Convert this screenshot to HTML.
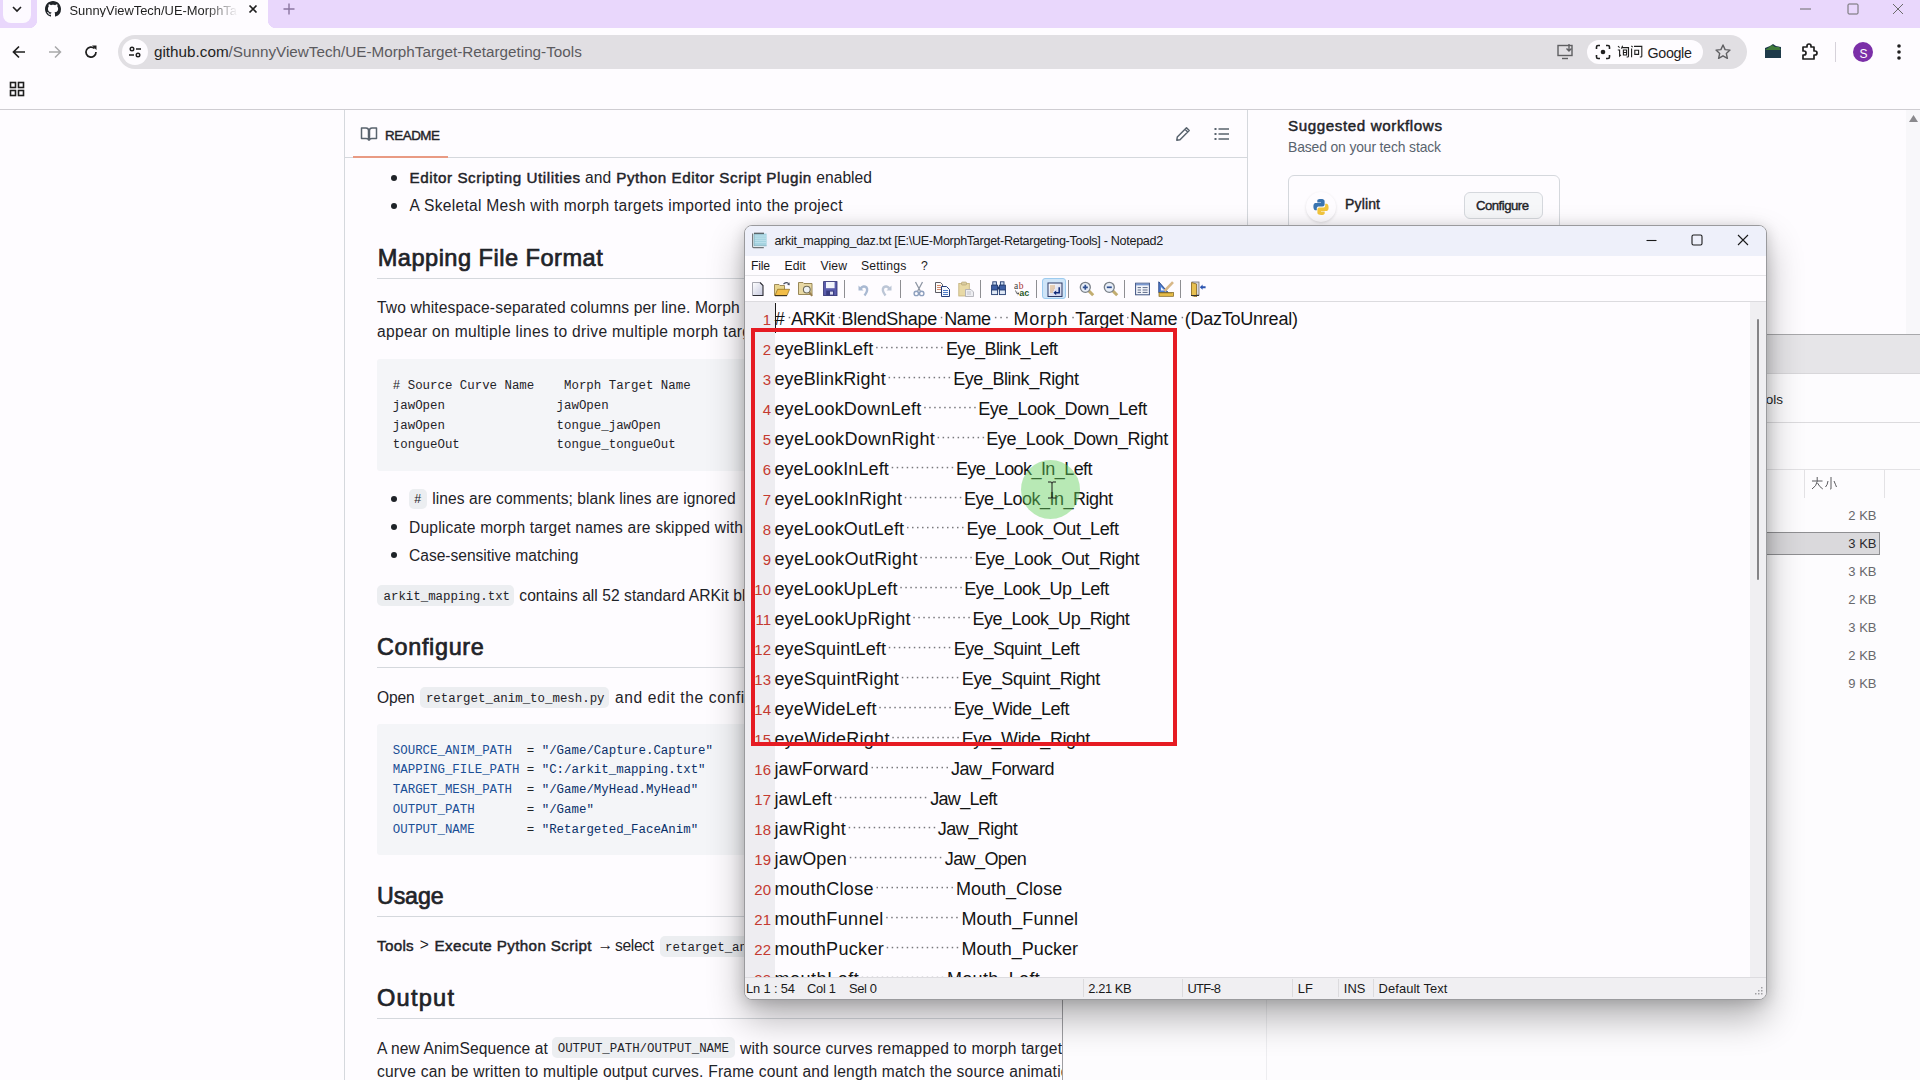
<!DOCTYPE html><html><head><meta charset="utf-8"><style>
    html,body{margin:0;padding:0;}
    body{width:1920px;height:1080px;overflow:hidden;position:relative;background:#fefcff;font-family:"Liberation Sans",sans-serif;}
    div,svg{box-sizing:border-box;}
    </style></head><body>
<div style="position:absolute;left:0px;top:0px;width:1920px;height:28px;background:#e9d7fc;"></div>
<div style="position:absolute;left:3px;top:0px;width:28px;height:23px;background:#fdfaff;border-radius:0 0 8px 8px;"></div>
<svg style="position:absolute;left:11px;top:5px;" width="12" height="8" viewBox="0 0 12 8"><path d="M2 2 L6 6 L10 2" fill="none" stroke="#1f1f1f" stroke-width="1.6"/></svg>
<div style="position:absolute;left:37px;top:0px;width:231px;height:29px;background:#fefcff;border-radius:0 0 0 0;"></div>
<div style="position:absolute;left:29px;top:20px;width:8px;height:9px;background:radial-gradient(circle at 0 0, #e9d7fc 8px, #fefcff 8.5px);"></div>
<div style="position:absolute;left:268px;top:20px;width:8px;height:9px;background:radial-gradient(circle at 100% 0, #e9d7fc 8px, #fefcff 8.5px);"></div>
<svg style="position:absolute;left:45px;top:1px;" width="16" height="16" viewBox="0 0 16 16"><path fill="#1f2328" d="M8 0C3.58 0 0 3.58 0 8c0 3.54 2.29 6.53 5.47 7.59.4.07.55-.17.55-.38 0-.19-.01-.82-.01-1.49-2.01.37-2.53-.49-2.69-.94-.09-.23-.48-.94-.82-1.13-.28-.15-.68-.52-.01-.53.63-.01 1.08.58 1.23.82.72 1.21 1.87.87 2.33.66.07-.52.28-.87.51-1.07-1.78-.2-3.64-.89-3.64-3.95 0-.87.31-1.59.82-2.15-.08-.2-.36-1.02.08-2.12 0 0 .67-.21 2.2.82.64-.18 1.32-.27 2-.27.68 0 1.36.09 2 .27 1.53-1.04 2.2-.82 2.2-.82.44 1.1.16 1.92.08 2.12.51.56.82 1.27.82 2.15 0 3.07-1.87 3.75-3.65 3.95.29.25.54.73.54 1.48 0 1.07-.01 1.93-.01 2.2 0 .21.15.46.55.38A8.013 8.013 0 0016 8c0-4.42-3.58-8-8-8z"/></svg>
<div style="position:absolute;left:69.5px;top:4.54px;font-family:'Liberation Sans', sans-serif;font-size:12.9px;line-height:12.9px;font-weight:400;color:#1f1f1f;white-space:pre;width:168px;overflow:hidden;-webkit-mask-image:linear-gradient(90deg,#000 80%,transparent 100%);">SunnyViewTech/UE-MorphTa</div>
<svg style="position:absolute;left:248px;top:4px;" width="10" height="10" viewBox="0 0 10 10"><path d="M1.5 1.5 L8.5 8.5 M8.5 1.5 L1.5 8.5" stroke="#1f1f1f" stroke-width="1.7"/></svg>
<svg style="position:absolute;left:283px;top:3px;" width="12" height="12" viewBox="0 0 12 12"><path d="M6 0.5 V11.5 M0.5 6 H11.5" stroke="#8a76a0" stroke-width="1.4"/></svg>
<svg style="position:absolute;left:1800px;top:8px;" width="12" height="2" viewBox="0 0 12 2"><path d="M0 1 H11" stroke="#6b6b6b" stroke-width="1"/></svg>
<svg style="position:absolute;left:1847px;top:3px;" width="12" height="12" viewBox="0 0 12 12"><rect x="1" y="1" width="10" height="10" fill="none" stroke="#6b6b6b" stroke-width="1" rx="1"/></svg>
<svg style="position:absolute;left:1892px;top:3px;" width="12" height="12" viewBox="0 0 12 12"><path d="M1 1 L11 11 M11 1 L1 11" stroke="#6b6b6b" stroke-width="1"/></svg>
<svg style="position:absolute;left:11px;top:44px;" width="16" height="16" viewBox="0 0 16 16"><path d="M14 8 H2.5 M8 2.5 L2.5 8 L8 13.5" fill="none" stroke="#1f1f1f" stroke-width="1.7"/></svg>
<svg style="position:absolute;left:47px;top:44px;" width="16" height="16" viewBox="0 0 16 16"><path d="M2 8 H13.5 M8 2.5 L13.5 8 L8 13.5" fill="none" stroke="#a9a9ab" stroke-width="1.5"/></svg>
<svg style="position:absolute;left:83px;top:44px;" width="16" height="16" viewBox="0 0 16 16"><path d="M13 8 A5 5 0 1 1 11.5 4.5" fill="none" stroke="#1f1f1f" stroke-width="1.7"/><path d="M9 1.5 L13.5 1.5 L13.5 6 Z" fill="#1f1f1f"/></svg>
<div style="position:absolute;left:118px;top:35px;width:1629px;height:34px;background:#e1dfe3;border-radius:17px;"></div>
<div style="position:absolute;left:122px;top:39px;width:26px;height:26px;background:#fefcff;border-radius:13px;"></div>
<svg style="position:absolute;left:127px;top:44px;" width="16" height="16" viewBox="0 0 16 16"><circle cx="5" cy="5" r="1.8" fill="none" stroke="#1f1f1f" stroke-width="1.4"/><path d="M9 5 H14 M2 11 H7" stroke="#1f1f1f" stroke-width="1.4"/><circle cx="11" cy="11" r="1.8" fill="none" stroke="#1f1f1f" stroke-width="1.4"/></svg>
<div style="position:absolute;left:154px;top:44.03px;font-family:'Liberation Sans';font-size:15.26px;line-height:15.26px;white-space:pre;color:#5b5a5e"><span style="color:#1f1f1f">github.com</span>/SunnyViewTech/UE-MorphTarget-Retargeting-Tools</div>
<svg style="position:absolute;left:1557px;top:44px;" width="18" height="16" viewBox="0 0 18 16"><rect x="1" y="1.5" width="14" height="10" fill="none" stroke="#5f5f62" stroke-width="1.4"/><path d="M5 14.5 H11" stroke="#5f5f62" stroke-width="1.4"/><path d="M12 0 V7 M9.5 4.5 L12 7 L14.5 4.5" fill="none" stroke="#5f5f62" stroke-width="1.4"/></svg>
<div style="position:absolute;left:1587px;top:40px;width:116px;height:24px;background:#fefcff;border-radius:12px;"></div>
<svg style="position:absolute;left:1595px;top:44px;" width="16" height="16" viewBox="0 0 16 16"><path d="M1.5 5 V3 Q1.5 1.5 3 1.5 H5 M11 1.5 H13 Q14.5 1.5 14.5 3 V5 M14.5 11 V13 Q14.5 14.5 13 14.5 H11 M5 14.5 H3 Q1.5 14.5 1.5 13 V11" fill="none" stroke="#1f1f1f" stroke-width="1.6"/><circle cx="8" cy="8" r="2.3" fill="#1f1f1f"/></svg>
<svg style="position:absolute;left:1617px;top:45px;" width="26" height="13" viewBox="0 0 26 13"><g fill="none" stroke="#1f1f1f" stroke-width="1.1"><path d="M1 1.2 L2.6 2.6 M0.8 5 H2.6 V11 L4 9.8 M5.6 0.8 L4.4 3.6 M5.2 2.6 H11.5 V11.2 Q11.5 12 10.6 12 H9.6 M6.4 5 H9.6 V10 H6.4 Z M6.4 7.5 H9.6"/><path d="M14.4 0.8 L15.6 2.2 M14.6 3.4 V12.2 M17 1.4 H24.8 V11.2 Q24.8 12 23.9 12 H22.8 M17.8 5.2 H21.6 V9.4 H17.8 Z"/></g></svg>
<div style="position:absolute;left:1647.5px;top:45.74px;font-family:'Liberation Sans', sans-serif;font-size:14.3px;line-height:14.3px;font-weight:400;color:#1f1f1f;white-space:pre;letter-spacing:-0.342px;">Google</div>
<svg style="position:absolute;left:1714px;top:43px;" width="18" height="18" viewBox="0 0 18 18"><path d="M9 2 L11.1 6.6 L16 7.1 L12.3 10.4 L13.4 15.3 L9 12.8 L4.6 15.3 L5.7 10.4 L2 7.1 L6.9 6.6 Z" fill="none" stroke="#5f5f62" stroke-width="1.4" stroke-linejoin="round"/></svg>
<svg style="position:absolute;left:1764px;top:43px;" width="19" height="17" viewBox="0 0 19 17"><path d="M1 5 L6 3 L9 1 L12 3 L17 4 L17 15 L1 15 Z" fill="#1e3a4a"/><path d="M4 5 L8 2 L11 4 L15 4 L17 7 L1 7 Z" fill="#3f7a3a"/></svg>
<svg style="position:absolute;left:1800px;top:43px;" width="18" height="18" viewBox="0 0 18 18"><path d="M3 4 H7 V3 A2 2 0 0 1 11 3 V4 H14 V8 H15 A2 2 0 0 1 15 12 H14 V16 H3 V12 H4 A2 2 0 0 0 4 8 H3 Z" fill="none" stroke="#1f1f1f" stroke-width="1.7" stroke-linejoin="round"/></svg>
<div style="position:absolute;left:1835px;top:42px;width:1px;height:20px;background:#d6d2da;"></div>
<div style="position:absolute;left:1853px;top:42px;width:20px;height:20px;background:#7b2fa8;border-radius:10px;"></div>
<div style="position:absolute;left:1859.5px;top:47.80px;font-family:'Liberation Sans', sans-serif;font-size:12px;line-height:12px;font-weight:400;color:#ffffff;white-space:pre;">S</div>
<svg style="position:absolute;left:1896px;top:43px;" width="6" height="18" viewBox="0 0 6 18"><circle cx="3" cy="3" r="1.8" fill="#1f1f1f"/><circle cx="3" cy="9" r="1.8" fill="#1f1f1f"/><circle cx="3" cy="15" r="1.8" fill="#1f1f1f"/></svg>
<svg style="position:absolute;left:9px;top:81px;" width="16" height="16" viewBox="0 0 16 16"><rect x="1.5" y="1.5" width="5" height="5" fill="none" stroke="#1f1f1f" stroke-width="1.6"/><rect x="9.5" y="1.5" width="5" height="5" fill="none" stroke="#1f1f1f" stroke-width="1.6"/><rect x="1.5" y="9.5" width="5" height="5" fill="none" stroke="#1f1f1f" stroke-width="1.6"/><rect x="9.5" y="9.5" width="5" height="5" fill="none" stroke="#1f1f1f" stroke-width="1.6"/></svg>
<div style="position:absolute;left:0px;top:109px;width:1920px;height:1px;background:#cfcdd2;"></div>
<div style="position:absolute;left:344px;top:110px;width:1px;height:970px;background:#d5d8dd;"></div>
<div style="position:absolute;left:1247px;top:110px;width:1px;height:230px;background:#d5d8dd;"></div>
<div style="position:absolute;left:345px;top:157px;width:902px;height:1px;background:#d5d8dd;"></div>
<div style="position:absolute;left:353px;top:156px;width:95px;height:2px;background:#e99a83;"></div>
<svg style="position:absolute;left:360px;top:126px;" width="18" height="16" viewBox="0 0 18 16"><path d="M1.5 2 H6 Q8.5 2 8.5 4.5 V14 Q8.5 12.5 6 12.5 H1.5 Z M16.5 2 H12 Q9.5 2 9.5 4.5 V14 Q9.5 12.5 12 12.5 H16.5 Z" fill="none" stroke="#59636e" stroke-width="1.5" stroke-linejoin="round"/></svg>
<div style="position:absolute;left:385px;top:129.11px;font-family:'Liberation Sans', sans-serif;font-size:13.4px;line-height:13.4px;font-weight:400;color:#1f2328;white-space:pre;letter-spacing:-0.459px;-webkit-text-stroke:0.40px currentColor;">README</div>
<svg style="position:absolute;left:1175px;top:126px;" width="16" height="16" viewBox="0 0 16 16"><path d="M11.5 1.8 L14.2 4.5 L5 13.7 L1.8 14.2 L2.3 11 Z M10 3.3 L12.7 6" fill="none" stroke="#59636e" stroke-width="1.5" stroke-linejoin="round"/></svg>
<svg style="position:absolute;left:1214px;top:127px;" width="16" height="14" viewBox="0 0 16 14"><rect x="0.5" y="1" width="2" height="2" fill="#59636e"/><rect x="0.5" y="6" width="2" height="2" fill="#59636e"/><rect x="0.5" y="11" width="2" height="2" fill="#59636e"/><path d="M4.5 2 H15 M4.5 7 H15 M4.5 12 H15" stroke="#59636e" stroke-width="1.6"/></svg>
<div style="position:absolute;left:391px;top:175px;width:6px;height:6px;background:#1f2328;border-radius:3px;"></div>
<div style="position:absolute;left:409.5px;top:169.88px;font-family:'Liberation Sans', sans-serif;font-size:15.2px;line-height:15.2px;font-weight:400;color:#1f2328;white-space:pre;letter-spacing:0.574px;-webkit-text-stroke:0.46px currentColor;">Editor Scripting Utilities</div>
<div style="position:absolute;left:585px;top:170.24px;font-family:'Liberation Sans', sans-serif;font-size:15.6px;line-height:15.6px;font-weight:400;color:#1f2328;white-space:pre;letter-spacing:0.109px;">and</div>
<div style="position:absolute;left:616.25px;top:169.88px;font-family:'Liberation Sans', sans-serif;font-size:15.2px;line-height:15.2px;font-weight:400;color:#1f2328;white-space:pre;letter-spacing:0.552px;-webkit-text-stroke:0.46px currentColor;">Python Editor Script Plugin</div>
<div style="position:absolute;left:816.25px;top:170.24px;font-family:'Liberation Sans', sans-serif;font-size:15.6px;line-height:15.6px;font-weight:400;color:#1f2328;white-space:pre;letter-spacing:0.042px;">enabled</div>
<div style="position:absolute;left:391px;top:203px;width:6px;height:6px;background:#1f2328;border-radius:3px;"></div>
<div style="position:absolute;left:409.5px;top:198.24px;font-family:'Liberation Sans', sans-serif;font-size:15.6px;line-height:15.6px;font-weight:400;color:#1f2328;white-space:pre;letter-spacing:0.287px;">A Skeletal Mesh with morph targets imported into the project</div>
<div style="position:absolute;left:377.7px;top:247.24px;font-family:'Liberation Sans', sans-serif;font-size:23.6px;line-height:23.6px;font-weight:400;color:#1f2328;white-space:pre;letter-spacing:0.480px;-webkit-text-stroke:0.71px currentColor;">Mapping File Format</div>
<div style="position:absolute;left:377px;top:278px;width:870px;height:1px;background:#d5d8dd;"></div>
<div style="position:absolute;left:377px;top:300.24px;font-family:'Liberation Sans', sans-serif;font-size:15.6px;line-height:15.6px;font-weight:400;color:#1f2328;white-space:pre;letter-spacing:0.137px;">Two whitespace-separated columns per line. Morph target names may</div>
<div style="position:absolute;left:377px;top:324.24px;font-family:'Liberation Sans', sans-serif;font-size:15.6px;line-height:15.6px;font-weight:400;color:#1f2328;white-space:pre;letter-spacing:0.309px;">appear on multiple lines to drive multiple morph targets from one source curve.</div>
<div style="position:absolute;left:377px;top:359px;width:870px;height:111.5px;background:#f4f5f8;border-radius:3px;"></div>
<div style="position:absolute;left:392.8px;top:380.06px;font-family:'Liberation Mono', monospace;font-size:12.42px;line-height:12.42px;font-weight:400;color:#1f2328;white-space:pre;"># Source Curve Name    Morph Target Name</div>
<div style="position:absolute;left:392.8px;top:400.06px;font-family:'Liberation Mono', monospace;font-size:12.42px;line-height:12.42px;font-weight:400;color:#1f2328;white-space:pre;">jawOpen               jawOpen</div>
<div style="position:absolute;left:392.8px;top:420.06px;font-family:'Liberation Mono', monospace;font-size:12.42px;line-height:12.42px;font-weight:400;color:#1f2328;white-space:pre;">jawOpen               tongue_jawOpen</div>
<div style="position:absolute;left:392.8px;top:438.86px;font-family:'Liberation Mono', monospace;font-size:12.42px;line-height:12.42px;font-weight:400;color:#1f2328;white-space:pre;">tongueOut             tongue_tongueOut</div>
<div style="position:absolute;left:391px;top:496px;width:6px;height:6px;background:#1f2328;border-radius:3px;"></div>
<div style="position:absolute;left:409px;top:489px;width:18px;height:20px;background:#eceef1;border-radius:5px;"></div>
<div style="position:absolute;left:414px;top:494.06px;font-family:'Liberation Mono', monospace;font-size:12.42px;line-height:12.42px;font-weight:400;color:#1f2328;white-space:pre;">#</div>
<div style="position:absolute;left:432.2px;top:491.24px;font-family:'Liberation Sans', sans-serif;font-size:15.6px;line-height:15.6px;font-weight:400;color:#1f2328;white-space:pre;letter-spacing:0.062px;">lines are comments; blank lines are ignored</div>
<div style="position:absolute;left:391px;top:524px;width:6px;height:6px;background:#1f2328;border-radius:3px;"></div>
<div style="position:absolute;left:409px;top:519.74px;font-family:'Liberation Sans', sans-serif;font-size:15.6px;line-height:15.6px;font-weight:400;color:#1f2328;white-space:pre;letter-spacing:0.184px;">Duplicate morph target names are skipped with a warning</div>
<div style="position:absolute;left:391px;top:552px;width:6px;height:6px;background:#1f2328;border-radius:3px;"></div>
<div style="position:absolute;left:409px;top:547.74px;font-family:'Liberation Sans', sans-serif;font-size:15.6px;line-height:15.6px;font-weight:400;color:#1f2328;white-space:pre;letter-spacing:-0.022px;">Case-sensitive matching</div>
<div style="position:absolute;left:377px;top:584.5px;width:137px;height:21px;background:#eceef1;border-radius:5px;"></div>
<div style="position:absolute;left:383.5px;top:590.86px;font-family:'Liberation Mono', monospace;font-size:12.42px;line-height:12.42px;font-weight:400;color:#1f2328;white-space:pre;">arkit_mapping.txt</div>
<div style="position:absolute;left:519.3px;top:588.24px;font-family:'Liberation Sans', sans-serif;font-size:15.6px;line-height:15.6px;font-weight:400;color:#1f2328;white-space:pre;letter-spacing:0.048px;">contains all 52 standard ARKit blendshapes mapped to DazToUnreal names.</div>
<div style="position:absolute;left:377px;top:635.61px;font-family:'Liberation Sans', sans-serif;font-size:23.4px;line-height:23.4px;font-weight:400;color:#1f2328;white-space:pre;letter-spacing:0.672px;-webkit-text-stroke:0.70px currentColor;">Configure</div>
<div style="position:absolute;left:377px;top:667px;width:870px;height:1px;background:#d5d8dd;"></div>
<div style="position:absolute;left:377.1px;top:690.24px;font-family:'Liberation Sans', sans-serif;font-size:15.6px;line-height:15.6px;font-weight:400;color:#1f2328;white-space:pre;letter-spacing:-0.185px;">Open</div>
<div style="position:absolute;left:420.4px;top:686.5px;width:189px;height:21px;background:#eceef1;border-radius:5px;"></div>
<div style="position:absolute;left:425.9px;top:692.86px;font-family:'Liberation Mono', monospace;font-size:12.42px;line-height:12.42px;font-weight:400;color:#1f2328;white-space:pre;">retarget_anim_to_mesh.py</div>
<div style="position:absolute;left:614.9px;top:690.24px;font-family:'Liberation Sans', sans-serif;font-size:15.6px;line-height:15.6px;font-weight:400;color:#1f2328;white-space:pre;letter-spacing:0.626px;">and edit the config section at the top:</div>
<div style="position:absolute;left:377px;top:724px;width:870px;height:131px;background:#f4f5f8;border-radius:3px;"></div>
<div style="position:absolute;left:392.8px;top:744.56px;font-family:'Liberation Mono', monospace;font-size:12.42px;line-height:12.42px;font-weight:400;color:#1f2328;white-space:pre;"><span style="color:#1b4f96">SOURCE_ANIM_PATH </span> <span style="color:#1f2328">=</span> <span style="color:#0a3069">"/Game/Capture.Capture"</span></div>
<div style="position:absolute;left:392.8px;top:764.31px;font-family:'Liberation Mono', monospace;font-size:12.42px;line-height:12.42px;font-weight:400;color:#1f2328;white-space:pre;"><span style="color:#1b4f96">MAPPING_FILE_PATH</span> <span style="color:#1f2328">=</span> <span style="color:#0a3069">"C:/arkit_mapping.txt"</span></div>
<div style="position:absolute;left:392.8px;top:784.06px;font-family:'Liberation Mono', monospace;font-size:12.42px;line-height:12.42px;font-weight:400;color:#1f2328;white-space:pre;"><span style="color:#1b4f96">TARGET_MESH_PATH </span> <span style="color:#1f2328">=</span> <span style="color:#0a3069">"/Game/MyHead.MyHead"</span></div>
<div style="position:absolute;left:392.8px;top:803.81px;font-family:'Liberation Mono', monospace;font-size:12.42px;line-height:12.42px;font-weight:400;color:#1f2328;white-space:pre;"><span style="color:#1b4f96">OUTPUT_PATH      </span> <span style="color:#1f2328">=</span> <span style="color:#0a3069">"/Game"</span></div>
<div style="position:absolute;left:392.8px;top:823.56px;font-family:'Liberation Mono', monospace;font-size:12.42px;line-height:12.42px;font-weight:400;color:#1f2328;white-space:pre;"><span style="color:#1b4f96">OUTPUT_NAME      </span> <span style="color:#1f2328">=</span> <span style="color:#0a3069">"Retargeted_FaceAnim"</span></div>
<div style="position:absolute;left:377px;top:884.78px;font-family:'Liberation Sans', sans-serif;font-size:23.2px;line-height:23.2px;font-weight:400;color:#1f2328;white-space:pre;letter-spacing:-0.108px;-webkit-text-stroke:0.70px currentColor;">Usage</div>
<div style="position:absolute;left:377px;top:916px;width:870px;height:1px;background:#d5d8dd;"></div>
<div style="position:absolute;left:377px;top:937.58px;font-family:'Liberation Sans', sans-serif;font-size:15.2px;line-height:15.2px;font-weight:400;color:#1f2328;white-space:pre;letter-spacing:0.308px;-webkit-text-stroke:0.46px currentColor;">Tools</div>
<div style="position:absolute;left:419.8px;top:937.24px;font-family:'Liberation Sans', sans-serif;font-size:15.6px;line-height:15.6px;font-weight:400;color:#1f2328;white-space:pre;letter-spacing:-1.009px;">&gt;</div>
<div style="position:absolute;left:434.6px;top:937.58px;font-family:'Liberation Sans', sans-serif;font-size:15.2px;line-height:15.2px;font-weight:400;color:#1f2328;white-space:pre;letter-spacing:0.374px;-webkit-text-stroke:0.46px currentColor;">Execute Python Script</div>
<div style="position:absolute;left:597.6px;top:937.24px;font-family:'Liberation Sans', sans-serif;font-size:15.6px;line-height:15.6px;font-weight:400;color:#1f2328;white-space:pre;">→</div>
<div style="position:absolute;left:614.9px;top:938.24px;font-family:'Liberation Sans', sans-serif;font-size:15.6px;line-height:15.6px;font-weight:400;color:#1f2328;white-space:pre;letter-spacing:-0.310px;">select</div>
<div style="position:absolute;left:659.6px;top:936px;width:200px;height:21px;background:#eceef1;border-radius:5px;"></div>
<div style="position:absolute;left:665.1px;top:941.86px;font-family:'Liberation Mono', monospace;font-size:12.42px;line-height:12.42px;font-weight:400;color:#1f2328;white-space:pre;">retarget_anim_to_mesh.py</div>
<div style="position:absolute;left:377px;top:987.44px;font-family:'Liberation Sans', sans-serif;font-size:23.6px;line-height:23.6px;font-weight:400;color:#1f2328;white-space:pre;letter-spacing:1.234px;-webkit-text-stroke:0.71px currentColor;">Output</div>
<div style="position:absolute;left:377px;top:1018px;width:870px;height:1px;background:#d5d8dd;"></div>
<div style="position:absolute;left:377px;top:1040.74px;font-family:'Liberation Sans', sans-serif;font-size:15.6px;line-height:15.6px;font-weight:400;color:#1f2328;white-space:pre;letter-spacing:0.092px;">A new AnimSequence at</div>
<div style="position:absolute;left:552.3px;top:1037px;width:182.3px;height:21px;background:#eceef1;border-radius:5px;"></div>
<div style="position:absolute;left:557.7px;top:1043.36px;font-family:'Liberation Mono', monospace;font-size:12.42px;line-height:12.42px;font-weight:400;color:#1f2328;white-space:pre;">OUTPUT_PATH/OUTPUT_NAME</div>
<div style="position:absolute;left:740px;top:1040.74px;font-family:'Liberation Sans', sans-serif;font-size:15.6px;line-height:15.6px;font-weight:400;color:#1f2328;white-space:pre;letter-spacing:0.198px;">with source curves remapped to morph target names. Each source</div>
<div style="position:absolute;left:377px;top:1063.74px;font-family:'Liberation Sans', sans-serif;font-size:15.6px;line-height:15.6px;font-weight:400;color:#1f2328;white-space:pre;letter-spacing:0.200px;">curve can be written to multiple output curves. Frame count and length match the source animation.</div>
<div style="position:absolute;left:1288px;top:118.08px;font-family:'Liberation Sans', sans-serif;font-size:15.2px;line-height:15.2px;font-weight:400;color:#1f2328;white-space:pre;letter-spacing:0.582px;-webkit-text-stroke:0.46px currentColor;">Suggested workflows</div>
<div style="position:absolute;left:1288px;top:141.19px;font-family:'Liberation Sans', sans-serif;font-size:13.9px;line-height:13.9px;font-weight:400;color:#59636e;white-space:pre;letter-spacing:-0.130px;">Based on your tech stack</div>
<div style="position:absolute;left:1288px;top:174.5px;width:272px;height:80px;border:1px solid #d5d8dd;border-radius:6px;background:#fefcff;"></div>
<div style="position:absolute;left:1306px;top:192px;width:30px;height:30px;background:#fefcff;border-radius:15px;box-shadow:0 1px 3px rgba(0,0,0,0.12);"></div>
<svg style="position:absolute;left:1312px;top:198px;" width="18" height="18" viewBox="0 0 18 18"><path d="M8.8 1 C5 1 5.3 2.7 5.3 2.7 V4.4 H9 V5 H3.8 C3.8 5 1.4 4.7 1.4 8.6 C1.4 12.4 3.5 12.3 3.5 12.3 H4.8 V10.5 C4.8 10.5 4.7 8.4 6.9 8.4 H10.6 C10.6 8.4 12.6 8.4 12.6 6.5 V3.2 C12.6 3.2 12.9 1 8.8 1 Z" fill="#3a74b0"/><path d="M9.2 17 C13 17 12.7 15.3 12.7 15.3 V13.6 H9 V13 H14.2 C14.2 13 16.6 13.3 16.6 9.4 C16.6 5.6 14.5 5.7 14.5 5.7 H13.2 V7.5 C13.2 7.5 13.3 9.6 11.1 9.6 H7.4 C7.4 9.6 5.4 9.6 5.4 11.5 V14.8 C5.4 14.8 5.1 17 9.2 17 Z" fill="#f2c53d"/></svg>
<div style="position:absolute;left:1345px;top:196.60px;font-family:'Liberation Sans', sans-serif;font-size:14px;line-height:14px;font-weight:400;color:#1f2328;white-space:pre;letter-spacing:0.153px;-webkit-text-stroke:0.42px currentColor;">Pylint</div>
<div style="position:absolute;left:1463.5px;top:191.5px;width:79px;height:27px;background:#f6f7f9;border:1px solid #d5d8dd;border-radius:6px;"></div>
<div style="position:absolute;left:1476px;top:199.28px;font-family:'Liberation Sans', sans-serif;font-size:13.2px;line-height:13.2px;font-weight:400;color:#1f2328;white-space:pre;letter-spacing:-0.523px;-webkit-text-stroke:0.40px currentColor;">Configure</div>
<div style="position:absolute;left:1906px;top:110px;width:14px;height:224px;background:#f8f7fa;"></div>
<svg style="position:absolute;left:1908px;top:114px;" width="11" height="9" viewBox="0 0 11 9"><path d="M5.5 1 L10 8 H1 Z" fill="#8a898d"/></svg>
<div style="position:absolute;left:1062px;top:334px;width:858px;height:746px;background:#fdfcfe;border-left:1px solid #9e9ea2;border-top:1px solid #a8a8ab;"></div>
<div style="position:absolute;left:1063px;top:335px;width:857px;height:39px;background:#e6e5e8;border-bottom:1px solid #d8d7da;"></div>
<div style="position:absolute;right:137px;top:392.52px;font-family:'Liberation Sans', sans-serif;font-size:13.5px;line-height:13.5px;font-weight:400;color:#1f1f1f;white-space:pre;text-align:right;">UE-MorphTarget-Retargeting-Tools</div>
<div style="position:absolute;left:1063px;top:422px;width:857px;height:1px;background:#dcdbde;"></div>
<div style="position:absolute;left:1063px;top:469px;width:857px;height:1px;background:#e3e2e5;"></div>
<div style="position:absolute;left:1804px;top:470px;width:1px;height:28px;background:#e3e2e5;"></div>
<div style="position:absolute;left:1884px;top:470px;width:1px;height:28px;background:#e3e2e5;"></div>
<svg style="position:absolute;left:1811px;top:476px;" width="26" height="14" viewBox="0 0 26 14"><path d="M6.2 1 V5.5 M1 5 H11.5 M6.2 5.5 Q5.5 10 1 13 M6.5 7 Q8.5 11 11.8 13" fill="none" stroke="#5a5a5e" stroke-width="1"/><path d="M20 1 V12.5 Q20 13.3 19 13 M17 5 Q16.5 9 14.5 11 M23 5 Q24.5 8.5 25.5 11" fill="none" stroke="#5a5a5e" stroke-width="1"/></svg>
<div style="position:absolute;left:1063px;top:531.5px;width:817px;height:23px;background:#dad9dc;border:1px solid #8f8f92;"></div>
<div style="position:absolute;right:43.5px;top:508.95px;font-family:'Liberation Sans', sans-serif;font-size:13px;line-height:13px;font-weight:400;color:#68686c;white-space:pre;text-align:right;">2 KB</div>
<div style="position:absolute;right:43.5px;top:536.95px;font-family:'Liberation Sans', sans-serif;font-size:13px;line-height:13px;font-weight:400;color:#2a2a2d;white-space:pre;text-align:right;">3 KB</div>
<div style="position:absolute;right:43.5px;top:564.95px;font-family:'Liberation Sans', sans-serif;font-size:13px;line-height:13px;font-weight:400;color:#68686c;white-space:pre;text-align:right;">3 KB</div>
<div style="position:absolute;right:43.5px;top:592.95px;font-family:'Liberation Sans', sans-serif;font-size:13px;line-height:13px;font-weight:400;color:#68686c;white-space:pre;text-align:right;">2 KB</div>
<div style="position:absolute;right:43.5px;top:620.95px;font-family:'Liberation Sans', sans-serif;font-size:13px;line-height:13px;font-weight:400;color:#68686c;white-space:pre;text-align:right;">3 KB</div>
<div style="position:absolute;right:43.5px;top:648.95px;font-family:'Liberation Sans', sans-serif;font-size:13px;line-height:13px;font-weight:400;color:#68686c;white-space:pre;text-align:right;">2 KB</div>
<div style="position:absolute;right:43.5px;top:676.95px;font-family:'Liberation Sans', sans-serif;font-size:13px;line-height:13px;font-weight:400;color:#68686c;white-space:pre;text-align:right;">9 KB</div>
<div style="position:absolute;left:1266px;top:999px;width:1px;height:81px;background:#ededf0;"></div>
<div style="position:absolute;left:744px;top:225px;width:1023px;height:775px;background:#fefcff;border:1px solid #9a9a9d;border-radius:8px;box-shadow:0 18px 36px rgba(0,0,0,0.30),0 2px 14px rgba(0,0,0,0.16);overflow:hidden;"></div>
<div style="position:absolute;left:745px;top:226px;width:1021px;height:30px;background:#eef0fa;border-radius:7px 7px 0 0;"></div>
<svg style="position:absolute;left:751px;top:231px;" width="18" height="18" viewBox="0 0 18 18"><rect x="1.5" y="2.5" width="11" height="14" fill="#fbfdff"/><path d="M1.6 2.5 V15.6 Q1.6 16.6 2.6 16.6 H12.8" fill="none" stroke="#707478" stroke-width="1.1"/><rect x="3" y="2.6" width="12.6" height="12.2" fill="#a5d3e0"/><path d="M3.5 5 H15 M3.5 7.2 H15 M3.5 9.4 H15 M3.5 11.6 H15" stroke="#c9e8f0" stroke-width="0.7"/><path d="M3 2.6 V14.8 H15.6" fill="none" stroke="#7da9b6" stroke-width="0.7"/><g fill="#3c4448"><circle cx="4" cy="2.3" r="0.9"/><circle cx="6" cy="2.3" r="0.9"/><circle cx="8" cy="2.3" r="0.9"/><circle cx="10" cy="2.3" r="0.9"/><circle cx="12" cy="2.3" r="0.9"/></g></svg>
<div style="position:absolute;left:774.4px;top:234.59px;font-family:'Liberation Sans', sans-serif;font-size:12.6px;line-height:12.6px;font-weight:400;color:#1a1a1a;white-space:pre;letter-spacing:-0.309px;">arkit_mapping_daz.txt [E:\UE-MorphTarget-Retargeting-Tools] - Notepad2</div>
<svg style="position:absolute;left:1646px;top:239px;" width="12" height="3" viewBox="0 0 12 3"><path d="M0.5 1.5 H10.5" stroke="#1a1a1a" stroke-width="1.1"/></svg>
<svg style="position:absolute;left:1691px;top:234px;" width="12" height="12" viewBox="0 0 12 12"><rect x="1" y="1" width="10" height="10" rx="1.5" fill="none" stroke="#1a1a1a" stroke-width="1.1"/></svg>
<svg style="position:absolute;left:1737px;top:234px;" width="12" height="12" viewBox="0 0 12 12"><path d="M1 1 L11 11 M11 1 L1 11" stroke="#1a1a1a" stroke-width="1.1"/></svg>
<div style="position:absolute;left:745px;top:256px;width:1021px;height:20px;background:#fefcff;border-bottom:1px solid #e6e5e9;"></div>
<div style="position:absolute;left:751px;top:260.13px;font-family:'Liberation Sans', sans-serif;font-size:12.2px;line-height:12.2px;font-weight:400;color:#1a1a1a;white-space:pre;letter-spacing:-0.214px;">File</div>
<div style="position:absolute;left:784.5px;top:260.13px;font-family:'Liberation Sans', sans-serif;font-size:12.2px;line-height:12.2px;font-weight:400;color:#1a1a1a;white-space:pre;letter-spacing:0.078px;">Edit</div>
<div style="position:absolute;left:820.5px;top:260.13px;font-family:'Liberation Sans', sans-serif;font-size:12.2px;line-height:12.2px;font-weight:400;color:#1a1a1a;white-space:pre;letter-spacing:0.099px;">View</div>
<div style="position:absolute;left:861px;top:260.13px;font-family:'Liberation Sans', sans-serif;font-size:12.2px;line-height:12.2px;font-weight:400;color:#1a1a1a;white-space:pre;letter-spacing:0.172px;">Settings</div>
<div style="position:absolute;left:921px;top:260.13px;font-family:'Liberation Sans', sans-serif;font-size:12.2px;line-height:12.2px;font-weight:400;color:#1a1a1a;white-space:pre;">?</div>
<div style="position:absolute;left:745px;top:276px;width:1021px;height:26px;background:#fefcff;border-bottom:1px solid #dcdbdf;"></div>
<svg style="position:absolute;left:751px;top:281px;" width="16" height="16" viewBox="0 0 16 16"><defs><linearGradient id="gN" x1="0" y1="0" x2="1" y2="1"><stop offset="0" stop-color="#ffffff"/><stop offset="1" stop-color="#c6c8de"/></linearGradient></defs><path d="M1.5 1.5 H9 L12 4.5 V14.5 H1.5 Z" fill="url(#gN)"/><path d="M9 1.5 L12 4.5 V14.5 H1.5" fill="none" stroke="#2c2c34" stroke-width="1.1"/><path d="M1.5 14.5 V1.5 H9" fill="none" stroke="#9c9ca6" stroke-width="0.9"/></svg>
<svg style="position:absolute;left:774px;top:281px;" width="16" height="16" viewBox="0 0 16 16"><path d="M0.5 3.5 H5 L6 4.5 H10.5 V14.5 H0.5 Z" fill="#e8d48e" stroke="#8a7440" stroke-width="0.8"/><path d="M1 14.5 L3.6 8.3 H15.6 L13 14.5 Z" fill="#f2bd48" stroke="#8a6a20" stroke-width="0.7"/><path d="M1 14.7 H13" stroke="#2a2418" stroke-width="1"/><path d="M9.5 3.2 Q12 0.2 14.8 2.6" fill="none" stroke="#4a5062" stroke-width="1.2"/><path d="M13.2 3.9 L15.8 4.2 L15.4 1.3 Z" fill="#4a5062"/></svg>
<svg style="position:absolute;left:798px;top:281px;" width="16" height="16" viewBox="0 0 16 16"><path d="M0.5 1.5 H5 L6 2.5 H14 V13.5 H0.5 Z" fill="#e8d8a4" stroke="#8f7d4a" stroke-width="0.9"/><circle cx="8.8" cy="8.6" r="3.4" fill="#eef2f4" stroke="#6d6a5a" stroke-width="1.1"/><path d="M11.3 11.3 L14.2 14.8" stroke="#9a8050" stroke-width="2.1"/></svg>
<svg style="position:absolute;left:823px;top:281px;" width="16" height="16" viewBox="0 0 16 16"><rect x="0.6" y="0.6" width="13.4" height="14" fill="#5a5cac" stroke="#2e2f6e" stroke-width="0.8"/><rect x="3" y="1" width="8.6" height="6.2" fill="#f2f4fb"/><rect x="3.2" y="9.6" width="8" height="5" fill="#3a3c80"/><rect x="7" y="10.6" width="3" height="3" fill="#d8daf0"/></svg>
<div style="position:absolute;left:844px;top:280px;width:1px;height:18px;background:#8e8e92;"></div>
<svg style="position:absolute;left:855px;top:281px;" width="16" height="16" viewBox="0 0 16 16"><path d="M3.5 4.5 V9.5 H8.5 Z" fill="#a9b9d2"/><path d="M5 8 Q8.5 3.8 11.5 6.5 Q13.5 9.5 9.5 14.5" fill="none" stroke="#a9b9d2" stroke-width="2.4"/></svg>
<svg style="position:absolute;left:879px;top:281px;" width="16" height="16" viewBox="0 0 16 16"><path d="M12.5 4.5 V9.5 H7.5 Z" fill="#bcc6d6"/><path d="M11 8 Q7.5 3.8 4.5 6.5 Q2.5 9.5 6.5 14.5" fill="none" stroke="#bcc6d6" stroke-width="2.4"/></svg>
<div style="position:absolute;left:900px;top:280px;width:1px;height:18px;background:#8e8e92;"></div>
<svg style="position:absolute;left:911px;top:281px;" width="16" height="16" viewBox="0 0 16 16"><path d="M4.5 1 L9.3 10 M11.5 1 L6.7 10" stroke="#8e96a4" stroke-width="1.3"/><circle cx="5.3" cy="12.4" r="2.2" fill="none" stroke="#8ea0be" stroke-width="1.4"/><circle cx="10.7" cy="12.4" r="2.2" fill="none" stroke="#8ea0be" stroke-width="1.4"/></svg>
<svg style="position:absolute;left:934px;top:281px;" width="16" height="16" viewBox="0 0 16 16"><path d="M1.5 1.5 H6.5 L8.5 3.5 V11.5 H1.5 Z" fill="#fdfbf8" stroke="#4a4a52" stroke-width="0.9"/><path d="M3 4.5 H7 M3 6.5 H7 M3 8.5 H7" stroke="#d07a5a" stroke-width="0.9"/><path d="M7.5 5.5 H12.5 L15.5 8.5 V15.5 H7.5 Z" fill="#f6f9ff" stroke="#233c78" stroke-width="1"/><path d="M9 9.5 H14 M9 11.5 H14 M9 13.5 H14" stroke="#3c6cc0" stroke-width="0.9"/></svg>
<svg style="position:absolute;left:958px;top:281px;" width="16" height="16" viewBox="0 0 16 16"><rect x="0.8" y="2.5" width="10.5" height="12.5" fill="#e8d9a6" stroke="#c2b07a" stroke-width="0.8"/><rect x="3.5" y="1" width="5" height="3" rx="0.8" fill="#d9cba0" stroke="#b0a070" stroke-width="0.6"/><path d="M7.5 8.5 H13 L15.5 11 V15.5 H7.5 Z" fill="#eeeef2" stroke="#a8a8b0" stroke-width="0.8"/><path d="M9 11 H13 M9 13 H13" stroke="#b8b8c0" stroke-width="0.8"/></svg>
<div style="position:absolute;left:980px;top:280px;width:1px;height:18px;background:#8e8e92;"></div>
<svg style="position:absolute;left:991px;top:281px;" width="16" height="16" viewBox="0 0 16 16"><g stroke="#243c70" stroke-width="0.9"><rect x="1.8" y="0.8" width="3.6" height="3.4" fill="#c8d8f0"/><rect x="9.4" y="0.8" width="3.6" height="3.4" fill="#c8d8f0"/><rect x="0.6" y="4.2" width="6" height="6" fill="#3e5fa5"/><rect x="8.4" y="4.2" width="6" height="6" fill="#3e5fa5"/><rect x="0.6" y="9" width="6" height="4.6" fill="#dfe8f6"/><rect x="8.4" y="9" width="6" height="4.6" fill="#dfe8f6"/></g><rect x="6.2" y="5.5" width="2.6" height="3" fill="#243c70"/></svg>
<svg style="position:absolute;left:1014px;top:281px;" width="16" height="16" viewBox="0 0 16 16"><text x="0" y="7.6" font-family="Liberation Serif" font-size="9.5" fill="#3a3a3a">a</text><text x="4.8" y="7.6" font-family="Liberation Serif" font-size="9.5" fill="#a83030">b</text><text x="5.2" y="15" font-family="Liberation Sans" font-size="9" font-weight="700" fill="#2a5a2a">ac</text><path d="M1.5 9.5 L2.8 12.5 L5 12.5 M3.6 11.3 L5 12.5 L3.6 13.7" fill="none" stroke="#444" stroke-width="0.8"/></svg>
<div style="position:absolute;left:1036px;top:280px;width:1px;height:18px;background:#8e8e92;"></div>
<div style="position:absolute;left:1042px;top:278px;width:24px;height:21px;background:#cfe5f8;border:1px solid #9ccbef;border-radius:3px;"></div>
<svg style="position:absolute;left:1047px;top:282px;" width="16" height="16" viewBox="0 0 16 16"><defs><linearGradient id="gW" x1="0" y1="0" x2="1" y2="1"><stop offset="0" stop-color="#ffffff"/><stop offset="1" stop-color="#c8cde8"/></linearGradient></defs><rect x="1" y="1" width="14" height="13.5" fill="url(#gW)" stroke="#2c3a66" stroke-width="1"/><path d="M3 4 H8 M3 6 H8 M3 8 H7 M3 10 H6" stroke="#d6a060" stroke-width="0.9"/><path d="M12.2 5.2 V10.8 H7.8" fill="none" stroke="#102a78" stroke-width="1.5"/><path d="M6.4 10.8 L9.2 8.4 V13.2 Z" fill="#102a78"/></svg>
<div style="position:absolute;left:1068px;top:280px;width:1px;height:18px;background:#8e8e92;"></div>
<svg style="position:absolute;left:1079px;top:281px;" width="16" height="16" viewBox="0 0 16 16"><path d="M9.6 9.6 L14.2 14.2" stroke="#c2ad70" stroke-width="3"/><circle cx="6.3" cy="6.3" r="5" fill="#e8eef8" stroke="#7a8088" stroke-width="1.3"/><path d="M3.8 6.3 H8.8 M6.3 3.8 V8.8" stroke="#2f4f90" stroke-width="1.7"/></svg>
<svg style="position:absolute;left:1103px;top:281px;" width="16" height="16" viewBox="0 0 16 16"><path d="M9.6 9.6 L14.2 14.2" stroke="#c2ad70" stroke-width="3"/><circle cx="6.3" cy="6.3" r="5" fill="#e8eef8" stroke="#7a8088" stroke-width="1.3"/><path d="M3.8 6.3 H8.8" stroke="#2f4f90" stroke-width="1.7"/></svg>
<div style="position:absolute;left:1124px;top:280px;width:1px;height:18px;background:#8e8e92;"></div>
<svg style="position:absolute;left:1135px;top:281px;" width="16" height="16" viewBox="0 0 16 16"><rect x="0.6" y="2.2" width="13.8" height="11.6" fill="#f4f6fb" stroke="#3c5080" stroke-width="1"/><rect x="1" y="2.6" width="13" height="1.8" fill="#7a98d0"/><path d="M2.6 6.6 H6 M7.6 6.6 H12.6 M2.6 9 H6 M7.6 9 H12.6 M2.6 11.4 H6 M7.6 11.4 H12.6" stroke="#4c5a7a" stroke-width="0.9"/></svg>
<svg style="position:absolute;left:1158px;top:281px;" width="16" height="16" viewBox="0 0 16 16"><path d="M0.8 0.8 V11.6 H10.2 Z" fill="#4f7ed0" stroke="#1e3c80" stroke-width="0.9"/><path d="M3 6 V9.6 H6.6 Z" fill="#f0f4ff"/><path d="M15 1.2 L6.5 10" stroke="#d8b888" stroke-width="2.6"/><rect x="1" y="11.5" width="14.6" height="3.8" fill="#e6bc48" stroke="#7a6020" stroke-width="0.7"/><path d="M3 11.5 V13 M5 11.5 V13 M7 11.5 V13 M9 11.5 V13 M11 11.5 V13 M13 11.5 V13" stroke="#7a6020" stroke-width="0.5"/></svg>
<div style="position:absolute;left:1180px;top:280px;width:1px;height:18px;background:#8e8e92;"></div>
<svg style="position:absolute;left:1190px;top:281px;" width="16" height="16" viewBox="0 0 16 16"><rect x="2" y="1" width="7" height="13" fill="#d8d8dc" stroke="#707078" stroke-width="0.8"/><path d="M1.5 1.5 L6.5 3 V16 L1.5 14.5 Z" fill="#e8c050" stroke="#8a6a1e" stroke-width="0.8"/><path d="M1 14.5 H9" stroke="#333" stroke-width="1"/><path d="M9.8 6.2 L12.6 3.6 V5.2 H15.6 V7.2 H12.6 V8.8 Z" fill="#2c54b0"/></svg>
<div style="position:absolute;left:745px;top:302px;width:30px;height:675px;background:#eeedf1;"></div>
<div style="position:absolute;left:1750px;top:302px;width:16px;height:675px;background:#f0eff2;"></div>
<div style="position:absolute;left:1757px;top:319px;width:2px;height:261px;background:#858487;border-radius:1px;"></div>
<div style="position:absolute;left:745px;top:977px;width:1021px;height:22px;background:#f0eff2;border-top:1px solid #dddce0;border-radius:0 0 7px 7px;"></div>
<div style="position:absolute;left:746px;top:983.03px;font-family:'Liberation Sans', sans-serif;font-size:12.9px;line-height:12.9px;font-weight:400;color:#1a1a1a;white-space:pre;letter-spacing:-0.146px;">Ln 1 : 54</div>
<div style="position:absolute;left:807px;top:983.03px;font-family:'Liberation Sans', sans-serif;font-size:12.9px;line-height:12.9px;font-weight:400;color:#1a1a1a;white-space:pre;letter-spacing:-0.273px;">Col 1</div>
<div style="position:absolute;left:849px;top:983.03px;font-family:'Liberation Sans', sans-serif;font-size:12.9px;line-height:12.9px;font-weight:400;color:#1a1a1a;white-space:pre;letter-spacing:-0.348px;">Sel 0</div>
<div style="position:absolute;left:1088.3px;top:983.03px;font-family:'Liberation Sans', sans-serif;font-size:12.9px;line-height:12.9px;font-weight:400;color:#1a1a1a;white-space:pre;letter-spacing:-0.446px;">2.21 KB</div>
<div style="position:absolute;left:1187.5px;top:983.03px;font-family:'Liberation Sans', sans-serif;font-size:12.9px;line-height:12.9px;font-weight:400;color:#1a1a1a;white-space:pre;letter-spacing:-0.758px;">UTF-8</div>
<div style="position:absolute;left:1297.8px;top:983.03px;font-family:'Liberation Sans', sans-serif;font-size:12.9px;line-height:12.9px;font-weight:400;color:#1a1a1a;white-space:pre;">LF</div>
<div style="position:absolute;left:1343.8px;top:983.03px;font-family:'Liberation Sans', sans-serif;font-size:12.9px;line-height:12.9px;font-weight:400;color:#1a1a1a;white-space:pre;">INS</div>
<div style="position:absolute;left:1378.6px;top:983.03px;font-family:'Liberation Sans', sans-serif;font-size:12.9px;line-height:12.9px;font-weight:400;color:#1a1a1a;white-space:pre;letter-spacing:0.078px;">Default Text</div>
<div style="position:absolute;left:1083px;top:979px;width:1px;height:18px;background:#dcdbde;"></div>
<div style="position:absolute;left:1182px;top:979px;width:1px;height:18px;background:#dcdbde;"></div>
<div style="position:absolute;left:1292px;top:979px;width:1px;height:18px;background:#dcdbde;"></div>
<div style="position:absolute;left:1338px;top:979px;width:1px;height:18px;background:#dcdbde;"></div>
<div style="position:absolute;left:1373px;top:979px;width:1px;height:18px;background:#dcdbde;"></div>
<svg style="position:absolute;left:1754px;top:986px;" width="10" height="10" viewBox="0 0 10 10"><g fill="#a0a0a3"><rect x="7" y="1" width="1.5" height="1.5"/><rect x="4" y="4" width="1.5" height="1.5"/><rect x="7" y="4" width="1.5" height="1.5"/><rect x="1" y="7" width="1.5" height="1.5"/><rect x="4" y="7" width="1.5" height="1.5"/><rect x="7" y="7" width="1.5" height="1.5"/></g></svg>
<div style="position:absolute;left:745px;top:302px;width:1005px;height:675px;overflow:hidden;">
<div style="position:absolute;left:0px;width:26px;text-align:right;top:10.25px;font-family:'Liberation Sans', sans-serif;font-size:15px;line-height:15px;color:#c43a30;white-space:pre">1</div>
<div style="position:absolute;left:29.80px;top:7.70px;font-family:'Liberation Sans', sans-serif;font-size:18px;line-height:18px;color:#141414;white-space:pre;letter-spacing:-0.016px;">#</div>
<div style="position:absolute;left:46.10px;top:7.70px;font-family:'Liberation Sans', sans-serif;font-size:18px;line-height:18px;color:#141414;white-space:pre;letter-spacing:-0.579px;">ARKit</div>
<div style="position:absolute;left:96.45px;top:7.70px;font-family:'Liberation Sans', sans-serif;font-size:18px;line-height:18px;color:#141414;white-space:pre;letter-spacing:-0.249px;">BlendShape</div>
<div style="position:absolute;left:199.20px;top:7.70px;font-family:'Liberation Sans', sans-serif;font-size:18px;line-height:18px;color:#141414;white-space:pre;letter-spacing:-0.372px;">Name</div>
<div style="position:absolute;left:268.60px;top:7.70px;font-family:'Liberation Sans', sans-serif;font-size:18px;line-height:18px;color:#141414;white-space:pre;letter-spacing:0.717px;">Morph</div>
<div style="position:absolute;left:330.30px;top:7.70px;font-family:'Liberation Sans', sans-serif;font-size:18px;line-height:18px;color:#141414;white-space:pre;letter-spacing:-0.326px;">Target</div>
<div style="position:absolute;left:385.00px;top:7.70px;font-family:'Liberation Sans', sans-serif;font-size:18px;line-height:18px;color:#141414;white-space:pre;letter-spacing:-0.139px;">Name</div>
<div style="position:absolute;left:439.70px;top:7.70px;font-family:'Liberation Sans', sans-serif;font-size:18px;line-height:18px;color:#141414;white-space:pre;letter-spacing:-0.233px;">(DazToUnreal)</div>
<div style="position:absolute;left:0px;width:26px;text-align:right;top:40.25px;font-family:'Liberation Sans', sans-serif;font-size:15px;line-height:15px;color:#c43a30;white-space:pre">2</div>
<div style="position:absolute;left:29.40px;top:37.70px;font-family:'Liberation Sans', sans-serif;font-size:18px;line-height:18px;color:#141414;white-space:pre;letter-spacing:0.067px;">eyeBlinkLeft</div>
<div style="position:absolute;left:200.90px;top:37.70px;font-family:'Liberation Sans', sans-serif;font-size:18px;line-height:18px;color:#141414;white-space:pre;letter-spacing:-0.606px;">Eye_Blink_Left</div>
<div style="position:absolute;left:0px;width:26px;text-align:right;top:70.25px;font-family:'Liberation Sans', sans-serif;font-size:15px;line-height:15px;color:#c43a30;white-space:pre">3</div>
<div style="position:absolute;left:29.40px;top:67.70px;font-family:'Liberation Sans', sans-serif;font-size:18px;line-height:18px;color:#141414;white-space:pre;letter-spacing:0.103px;">eyeBlinkRight</div>
<div style="position:absolute;left:208.20px;top:67.70px;font-family:'Liberation Sans', sans-serif;font-size:18px;line-height:18px;color:#141414;white-space:pre;letter-spacing:-0.456px;">Eye_Blink_Right</div>
<div style="position:absolute;left:0px;width:26px;text-align:right;top:100.25px;font-family:'Liberation Sans', sans-serif;font-size:15px;line-height:15px;color:#c43a30;white-space:pre">4</div>
<div style="position:absolute;left:29.40px;top:97.70px;font-family:'Liberation Sans', sans-serif;font-size:18px;line-height:18px;color:#141414;white-space:pre;letter-spacing:0.199px;">eyeLookDownLeft</div>
<div style="position:absolute;left:233.20px;top:97.70px;font-family:'Liberation Sans', sans-serif;font-size:18px;line-height:18px;color:#141414;white-space:pre;letter-spacing:-0.413px;">Eye_Look_Down_Left</div>
<div style="position:absolute;left:0px;width:26px;text-align:right;top:130.25px;font-family:'Liberation Sans', sans-serif;font-size:15px;line-height:15px;color:#c43a30;white-space:pre">5</div>
<div style="position:absolute;left:29.40px;top:127.70px;font-family:'Liberation Sans', sans-serif;font-size:18px;line-height:18px;color:#141414;white-space:pre;letter-spacing:0.280px;">eyeLookDownRight</div>
<div style="position:absolute;left:241.20px;top:127.70px;font-family:'Liberation Sans', sans-serif;font-size:18px;line-height:18px;color:#141414;white-space:pre;letter-spacing:-0.335px;">Eye_Look_Down_Right</div>
<div style="position:absolute;left:0px;width:26px;text-align:right;top:160.25px;font-family:'Liberation Sans', sans-serif;font-size:15px;line-height:15px;color:#c43a30;white-space:pre">6</div>
<div style="position:absolute;left:29.40px;top:157.70px;font-family:'Liberation Sans', sans-serif;font-size:18px;line-height:18px;color:#141414;white-space:pre;letter-spacing:0.109px;">eyeLookInLeft</div>
<div style="position:absolute;left:211.00px;top:157.70px;font-family:'Liberation Sans', sans-serif;font-size:18px;line-height:18px;color:#141414;white-space:pre;letter-spacing:-0.575px;">Eye_Look_In_Left</div>
<div style="position:absolute;left:0px;width:26px;text-align:right;top:190.25px;font-family:'Liberation Sans', sans-serif;font-size:15px;line-height:15px;color:#c43a30;white-space:pre">7</div>
<div style="position:absolute;left:29.40px;top:187.70px;font-family:'Liberation Sans', sans-serif;font-size:18px;line-height:18px;color:#141414;white-space:pre;letter-spacing:0.185px;">eyeLookInRight</div>
<div style="position:absolute;left:218.90px;top:187.70px;font-family:'Liberation Sans', sans-serif;font-size:18px;line-height:18px;color:#141414;white-space:pre;letter-spacing:-0.495px;">Eye_Look_In_Right</div>
<div style="position:absolute;left:0px;width:26px;text-align:right;top:220.25px;font-family:'Liberation Sans', sans-serif;font-size:15px;line-height:15px;color:#c43a30;white-space:pre">8</div>
<div style="position:absolute;left:29.40px;top:217.70px;font-family:'Liberation Sans', sans-serif;font-size:18px;line-height:18px;color:#141414;white-space:pre;letter-spacing:0.200px;">eyeLookOutLeft</div>
<div style="position:absolute;left:221.40px;top:217.70px;font-family:'Liberation Sans', sans-serif;font-size:18px;line-height:18px;color:#141414;white-space:pre;letter-spacing:-0.414px;">Eye_Look_Out_Left</div>
<div style="position:absolute;left:0px;width:26px;text-align:right;top:250.25px;font-family:'Liberation Sans', sans-serif;font-size:15px;line-height:15px;color:#c43a30;white-space:pre">9</div>
<div style="position:absolute;left:29.40px;top:247.70px;font-family:'Liberation Sans', sans-serif;font-size:18px;line-height:18px;color:#141414;white-space:pre;letter-spacing:0.279px;">eyeLookOutRight</div>
<div style="position:absolute;left:229.50px;top:247.70px;font-family:'Liberation Sans', sans-serif;font-size:18px;line-height:18px;color:#141414;white-space:pre;letter-spacing:-0.360px;">Eye_Look_Out_Right</div>
<div style="position:absolute;left:0px;width:26px;text-align:right;top:280.25px;font-family:'Liberation Sans', sans-serif;font-size:15px;line-height:15px;color:#c43a30;white-space:pre">10</div>
<div style="position:absolute;left:29.40px;top:277.70px;font-family:'Liberation Sans', sans-serif;font-size:18px;line-height:18px;color:#141414;white-space:pre;letter-spacing:0.159px;">eyeLookUpLeft</div>
<div style="position:absolute;left:219.30px;top:277.70px;font-family:'Liberation Sans', sans-serif;font-size:18px;line-height:18px;color:#141414;white-space:pre;letter-spacing:-0.548px;">Eye_Look_Up_Left</div>
<div style="position:absolute;left:0px;width:26px;text-align:right;top:310.25px;font-family:'Liberation Sans', sans-serif;font-size:15px;line-height:15px;color:#c43a30;white-space:pre">11</div>
<div style="position:absolute;left:29.40px;top:307.70px;font-family:'Liberation Sans', sans-serif;font-size:18px;line-height:18px;color:#141414;white-space:pre;letter-spacing:0.224px;">eyeLookUpRight</div>
<div style="position:absolute;left:227.40px;top:307.70px;font-family:'Liberation Sans', sans-serif;font-size:18px;line-height:18px;color:#141414;white-space:pre;letter-spacing:-0.483px;">Eye_Look_Up_Right</div>
<div style="position:absolute;left:0px;width:26px;text-align:right;top:340.25px;font-family:'Liberation Sans', sans-serif;font-size:15px;line-height:15px;color:#c43a30;white-space:pre">12</div>
<div style="position:absolute;left:29.40px;top:337.70px;font-family:'Liberation Sans', sans-serif;font-size:18px;line-height:18px;color:#141414;white-space:pre;letter-spacing:0.117px;">eyeSquintLeft</div>
<div style="position:absolute;left:208.70px;top:337.70px;font-family:'Liberation Sans', sans-serif;font-size:18px;line-height:18px;color:#141414;white-space:pre;letter-spacing:-0.436px;">Eye_Squint_Left</div>
<div style="position:absolute;left:0px;width:26px;text-align:right;top:370.25px;font-family:'Liberation Sans', sans-serif;font-size:15px;line-height:15px;color:#c43a30;white-space:pre">13</div>
<div style="position:absolute;left:29.40px;top:367.70px;font-family:'Liberation Sans', sans-serif;font-size:18px;line-height:18px;color:#141414;white-space:pre;letter-spacing:0.185px;">eyeSquintRight</div>
<div style="position:absolute;left:216.80px;top:367.70px;font-family:'Liberation Sans', sans-serif;font-size:18px;line-height:18px;color:#141414;white-space:pre;letter-spacing:-0.381px;">Eye_Squint_Right</div>
<div style="position:absolute;left:0px;width:26px;text-align:right;top:400.25px;font-family:'Liberation Sans', sans-serif;font-size:15px;line-height:15px;color:#c43a30;white-space:pre">14</div>
<div style="position:absolute;left:29.40px;top:397.70px;font-family:'Liberation Sans', sans-serif;font-size:18px;line-height:18px;color:#141414;white-space:pre;letter-spacing:0.194px;">eyeWideLeft</div>
<div style="position:absolute;left:208.70px;top:397.70px;font-family:'Liberation Sans', sans-serif;font-size:18px;line-height:18px;color:#141414;white-space:pre;letter-spacing:-0.523px;">Eye_Wide_Left</div>
<div style="position:absolute;left:0px;width:26px;text-align:right;top:430.25px;font-family:'Liberation Sans', sans-serif;font-size:15px;line-height:15px;color:#c43a30;white-space:pre">15</div>
<div style="position:absolute;left:29.40px;top:427.70px;font-family:'Liberation Sans', sans-serif;font-size:18px;line-height:18px;color:#141414;white-space:pre;letter-spacing:0.267px;">eyeWideRight</div>
<div style="position:absolute;left:216.80px;top:427.70px;font-family:'Liberation Sans', sans-serif;font-size:18px;line-height:18px;color:#141414;white-space:pre;letter-spacing:-0.437px;">Eye_Wide_Right</div>
<div style="position:absolute;left:0px;width:26px;text-align:right;top:460.25px;font-family:'Liberation Sans', sans-serif;font-size:15px;line-height:15px;color:#c43a30;white-space:pre">16</div>
<div style="position:absolute;left:29.40px;top:457.70px;font-family:'Liberation Sans', sans-serif;font-size:18px;line-height:18px;color:#141414;white-space:pre;letter-spacing:0.130px;">jawForward</div>
<div style="position:absolute;left:205.90px;top:457.70px;font-family:'Liberation Sans', sans-serif;font-size:18px;line-height:18px;color:#141414;white-space:pre;letter-spacing:-0.445px;">Jaw_Forward</div>
<div style="position:absolute;left:0px;width:26px;text-align:right;top:490.25px;font-family:'Liberation Sans', sans-serif;font-size:15px;line-height:15px;color:#c43a30;white-space:pre">17</div>
<div style="position:absolute;left:29.40px;top:487.70px;font-family:'Liberation Sans', sans-serif;font-size:18px;line-height:18px;color:#141414;white-space:pre;letter-spacing:0.076px;">jawLeft</div>
<div style="position:absolute;left:185.20px;top:487.70px;font-family:'Liberation Sans', sans-serif;font-size:18px;line-height:18px;color:#141414;white-space:pre;letter-spacing:-0.678px;">Jaw_Left</div>
<div style="position:absolute;left:0px;width:26px;text-align:right;top:520.25px;font-family:'Liberation Sans', sans-serif;font-size:15px;line-height:15px;color:#c43a30;white-space:pre">18</div>
<div style="position:absolute;left:29.40px;top:517.70px;font-family:'Liberation Sans', sans-serif;font-size:18px;line-height:18px;color:#141414;white-space:pre;letter-spacing:0.338px;">jawRight</div>
<div style="position:absolute;left:192.80px;top:517.70px;font-family:'Liberation Sans', sans-serif;font-size:18px;line-height:18px;color:#141414;white-space:pre;letter-spacing:-0.506px;">Jaw_Right</div>
<div style="position:absolute;left:0px;width:26px;text-align:right;top:550.25px;font-family:'Liberation Sans', sans-serif;font-size:15px;line-height:15px;color:#c43a30;white-space:pre">19</div>
<div style="position:absolute;left:29.40px;top:547.70px;font-family:'Liberation Sans', sans-serif;font-size:18px;line-height:18px;color:#141414;white-space:pre;letter-spacing:0.242px;">jawOpen</div>
<div style="position:absolute;left:199.80px;top:547.70px;font-family:'Liberation Sans', sans-serif;font-size:18px;line-height:18px;color:#141414;white-space:pre;letter-spacing:-0.595px;">Jaw_Open</div>
<div style="position:absolute;left:0px;width:26px;text-align:right;top:580.25px;font-family:'Liberation Sans', sans-serif;font-size:15px;line-height:15px;color:#c43a30;white-space:pre">20</div>
<div style="position:absolute;left:29.40px;top:577.70px;font-family:'Liberation Sans', sans-serif;font-size:18px;line-height:18px;color:#141414;white-space:pre;letter-spacing:0.350px;">mouthClose</div>
<div style="position:absolute;left:210.90px;top:577.70px;font-family:'Liberation Sans', sans-serif;font-size:18px;line-height:18px;color:#141414;white-space:pre;letter-spacing:0.024px;">Mouth_Close</div>
<div style="position:absolute;left:0px;width:26px;text-align:right;top:610.25px;font-family:'Liberation Sans', sans-serif;font-size:15px;line-height:15px;color:#c43a30;white-space:pre">21</div>
<div style="position:absolute;left:29.40px;top:607.70px;font-family:'Liberation Sans', sans-serif;font-size:18px;line-height:18px;color:#141414;white-space:pre;letter-spacing:0.382px;">mouthFunnel</div>
<div style="position:absolute;left:216.40px;top:607.70px;font-family:'Liberation Sans', sans-serif;font-size:18px;line-height:18px;color:#141414;white-space:pre;letter-spacing:0.147px;">Mouth_Funnel</div>
<div style="position:absolute;left:0px;width:26px;text-align:right;top:640.25px;font-family:'Liberation Sans', sans-serif;font-size:15px;line-height:15px;color:#c43a30;white-space:pre">22</div>
<div style="position:absolute;left:29.40px;top:637.70px;font-family:'Liberation Sans', sans-serif;font-size:18px;line-height:18px;color:#141414;white-space:pre;letter-spacing:0.334px;">mouthPucker</div>
<div style="position:absolute;left:216.40px;top:637.70px;font-family:'Liberation Sans', sans-serif;font-size:18px;line-height:18px;color:#141414;white-space:pre;letter-spacing:0.058px;">Mouth_Pucker</div>
<div style="position:absolute;left:0px;width:26px;text-align:right;top:670.25px;font-family:'Liberation Sans', sans-serif;font-size:15px;line-height:15px;color:#c43a30;white-space:pre">23</div>
<div style="position:absolute;left:29.40px;top:667.70px;font-family:'Liberation Sans', sans-serif;font-size:18px;line-height:18px;color:#141414;white-space:pre;letter-spacing:0.542px;">mouthLeft</div>
<div style="position:absolute;left:202.00px;top:667.70px;font-family:'Liberation Sans', sans-serif;font-size:18px;line-height:18px;color:#141414;white-space:pre;letter-spacing:0.293px;">Mouth_Left</div>
</div>
<svg style="position:absolute;left:745px;top:302px" width="1005" height="675"><g fill="#78787c"><rect x="43.7" y="14.8" width="1.5" height="1.5"/><rect x="93.7" y="14.8" width="1.5" height="1.5"/><rect x="195.8" y="14.8" width="1.5" height="1.5"/><rect x="249.9" y="14.8" width="1.5" height="1.5"/><rect x="255.3" y="14.8" width="1.5" height="1.5"/><rect x="261.2" y="14.8" width="1.5" height="1.5"/><rect x="327.3" y="14.8" width="1.5" height="1.5"/><rect x="382.0" y="14.8" width="1.5" height="1.5"/><rect x="436.6" y="14.8" width="1.5" height="1.5"/><rect x="131.1" y="44.8" width="1.5" height="1.5"/><rect x="136.1" y="44.8" width="1.5" height="1.5"/><rect x="141.1" y="44.8" width="1.5" height="1.5"/><rect x="146.1" y="44.8" width="1.5" height="1.5"/><rect x="151.1" y="44.8" width="1.5" height="1.5"/><rect x="156.1" y="44.8" width="1.5" height="1.5"/><rect x="161.1" y="44.8" width="1.5" height="1.5"/><rect x="166.1" y="44.8" width="1.5" height="1.5"/><rect x="171.1" y="44.8" width="1.5" height="1.5"/><rect x="176.1" y="44.8" width="1.5" height="1.5"/><rect x="181.1" y="44.8" width="1.5" height="1.5"/><rect x="186.1" y="44.8" width="1.5" height="1.5"/><rect x="191.1" y="44.8" width="1.5" height="1.5"/><rect x="196.1" y="44.8" width="1.5" height="1.5"/><rect x="143.6" y="74.8" width="1.5" height="1.5"/><rect x="148.6" y="74.8" width="1.5" height="1.5"/><rect x="153.6" y="74.8" width="1.5" height="1.5"/><rect x="158.6" y="74.8" width="1.5" height="1.5"/><rect x="163.6" y="74.8" width="1.5" height="1.5"/><rect x="168.6" y="74.8" width="1.5" height="1.5"/><rect x="173.6" y="74.8" width="1.5" height="1.5"/><rect x="178.6" y="74.8" width="1.5" height="1.5"/><rect x="183.6" y="74.8" width="1.5" height="1.5"/><rect x="188.6" y="74.8" width="1.5" height="1.5"/><rect x="193.6" y="74.8" width="1.5" height="1.5"/><rect x="198.6" y="74.8" width="1.5" height="1.5"/><rect x="203.6" y="74.8" width="1.5" height="1.5"/><rect x="179.2" y="104.8" width="1.5" height="1.5"/><rect x="184.2" y="104.8" width="1.5" height="1.5"/><rect x="189.2" y="104.8" width="1.5" height="1.5"/><rect x="194.2" y="104.8" width="1.5" height="1.5"/><rect x="199.2" y="104.8" width="1.5" height="1.5"/><rect x="204.2" y="104.8" width="1.5" height="1.5"/><rect x="209.2" y="104.8" width="1.5" height="1.5"/><rect x="214.2" y="104.8" width="1.5" height="1.5"/><rect x="219.2" y="104.8" width="1.5" height="1.5"/><rect x="224.2" y="104.8" width="1.5" height="1.5"/><rect x="229.2" y="104.8" width="1.5" height="1.5"/><rect x="192.6" y="134.8" width="1.5" height="1.5"/><rect x="197.6" y="134.8" width="1.5" height="1.5"/><rect x="202.6" y="134.8" width="1.5" height="1.5"/><rect x="207.6" y="134.8" width="1.5" height="1.5"/><rect x="212.6" y="134.8" width="1.5" height="1.5"/><rect x="217.6" y="134.8" width="1.5" height="1.5"/><rect x="222.6" y="134.8" width="1.5" height="1.5"/><rect x="227.6" y="134.8" width="1.5" height="1.5"/><rect x="232.6" y="134.8" width="1.5" height="1.5"/><rect x="237.6" y="134.8" width="1.5" height="1.5"/><rect x="146.7" y="164.8" width="1.5" height="1.5"/><rect x="151.7" y="164.8" width="1.5" height="1.5"/><rect x="156.7" y="164.8" width="1.5" height="1.5"/><rect x="161.7" y="164.8" width="1.5" height="1.5"/><rect x="166.7" y="164.8" width="1.5" height="1.5"/><rect x="171.7" y="164.8" width="1.5" height="1.5"/><rect x="176.7" y="164.8" width="1.5" height="1.5"/><rect x="181.7" y="164.8" width="1.5" height="1.5"/><rect x="186.7" y="164.8" width="1.5" height="1.5"/><rect x="191.7" y="164.8" width="1.5" height="1.5"/><rect x="196.7" y="164.8" width="1.5" height="1.5"/><rect x="201.7" y="164.8" width="1.5" height="1.5"/><rect x="206.7" y="164.8" width="1.5" height="1.5"/><rect x="159.8" y="194.8" width="1.5" height="1.5"/><rect x="164.8" y="194.8" width="1.5" height="1.5"/><rect x="169.8" y="194.8" width="1.5" height="1.5"/><rect x="174.8" y="194.8" width="1.5" height="1.5"/><rect x="179.8" y="194.8" width="1.5" height="1.5"/><rect x="184.8" y="194.8" width="1.5" height="1.5"/><rect x="189.8" y="194.8" width="1.5" height="1.5"/><rect x="194.8" y="194.8" width="1.5" height="1.5"/><rect x="199.8" y="194.8" width="1.5" height="1.5"/><rect x="204.8" y="194.8" width="1.5" height="1.5"/><rect x="209.8" y="194.8" width="1.5" height="1.5"/><rect x="214.8" y="194.8" width="1.5" height="1.5"/><rect x="162.0" y="224.8" width="1.5" height="1.5"/><rect x="167.0" y="224.8" width="1.5" height="1.5"/><rect x="172.0" y="224.8" width="1.5" height="1.5"/><rect x="177.0" y="224.8" width="1.5" height="1.5"/><rect x="182.0" y="224.8" width="1.5" height="1.5"/><rect x="187.0" y="224.8" width="1.5" height="1.5"/><rect x="192.0" y="224.8" width="1.5" height="1.5"/><rect x="197.0" y="224.8" width="1.5" height="1.5"/><rect x="202.0" y="224.8" width="1.5" height="1.5"/><rect x="207.0" y="224.8" width="1.5" height="1.5"/><rect x="212.0" y="224.8" width="1.5" height="1.5"/><rect x="217.0" y="224.8" width="1.5" height="1.5"/><rect x="175.3" y="254.8" width="1.5" height="1.5"/><rect x="180.3" y="254.8" width="1.5" height="1.5"/><rect x="185.3" y="254.8" width="1.5" height="1.5"/><rect x="190.3" y="254.8" width="1.5" height="1.5"/><rect x="195.3" y="254.8" width="1.5" height="1.5"/><rect x="200.3" y="254.8" width="1.5" height="1.5"/><rect x="205.3" y="254.8" width="1.5" height="1.5"/><rect x="210.3" y="254.8" width="1.5" height="1.5"/><rect x="215.3" y="254.8" width="1.5" height="1.5"/><rect x="220.3" y="254.8" width="1.5" height="1.5"/><rect x="225.3" y="254.8" width="1.5" height="1.5"/><rect x="155.3" y="284.8" width="1.5" height="1.5"/><rect x="160.3" y="284.8" width="1.5" height="1.5"/><rect x="165.3" y="284.8" width="1.5" height="1.5"/><rect x="170.3" y="284.8" width="1.5" height="1.5"/><rect x="175.3" y="284.8" width="1.5" height="1.5"/><rect x="180.3" y="284.8" width="1.5" height="1.5"/><rect x="185.3" y="284.8" width="1.5" height="1.5"/><rect x="190.3" y="284.8" width="1.5" height="1.5"/><rect x="195.3" y="284.8" width="1.5" height="1.5"/><rect x="200.3" y="284.8" width="1.5" height="1.5"/><rect x="205.3" y="284.8" width="1.5" height="1.5"/><rect x="210.3" y="284.8" width="1.5" height="1.5"/><rect x="215.3" y="284.8" width="1.5" height="1.5"/><rect x="168.3" y="314.8" width="1.5" height="1.5"/><rect x="173.3" y="314.8" width="1.5" height="1.5"/><rect x="178.3" y="314.8" width="1.5" height="1.5"/><rect x="183.3" y="314.8" width="1.5" height="1.5"/><rect x="188.3" y="314.8" width="1.5" height="1.5"/><rect x="193.3" y="314.8" width="1.5" height="1.5"/><rect x="198.3" y="314.8" width="1.5" height="1.5"/><rect x="203.3" y="314.8" width="1.5" height="1.5"/><rect x="208.3" y="314.8" width="1.5" height="1.5"/><rect x="213.3" y="314.8" width="1.5" height="1.5"/><rect x="218.3" y="314.8" width="1.5" height="1.5"/><rect x="223.3" y="314.8" width="1.5" height="1.5"/><rect x="143.8" y="344.8" width="1.5" height="1.5"/><rect x="148.8" y="344.8" width="1.5" height="1.5"/><rect x="153.8" y="344.8" width="1.5" height="1.5"/><rect x="158.8" y="344.8" width="1.5" height="1.5"/><rect x="163.8" y="344.8" width="1.5" height="1.5"/><rect x="168.8" y="344.8" width="1.5" height="1.5"/><rect x="173.8" y="344.8" width="1.5" height="1.5"/><rect x="178.8" y="344.8" width="1.5" height="1.5"/><rect x="183.8" y="344.8" width="1.5" height="1.5"/><rect x="188.8" y="344.8" width="1.5" height="1.5"/><rect x="193.8" y="344.8" width="1.5" height="1.5"/><rect x="198.8" y="344.8" width="1.5" height="1.5"/><rect x="203.8" y="344.8" width="1.5" height="1.5"/><rect x="156.8" y="374.8" width="1.5" height="1.5"/><rect x="161.8" y="374.8" width="1.5" height="1.5"/><rect x="166.8" y="374.8" width="1.5" height="1.5"/><rect x="171.8" y="374.8" width="1.5" height="1.5"/><rect x="176.8" y="374.8" width="1.5" height="1.5"/><rect x="181.8" y="374.8" width="1.5" height="1.5"/><rect x="186.8" y="374.8" width="1.5" height="1.5"/><rect x="191.8" y="374.8" width="1.5" height="1.5"/><rect x="196.8" y="374.8" width="1.5" height="1.5"/><rect x="201.8" y="374.8" width="1.5" height="1.5"/><rect x="206.8" y="374.8" width="1.5" height="1.5"/><rect x="211.8" y="374.8" width="1.5" height="1.5"/><rect x="134.3" y="404.8" width="1.5" height="1.5"/><rect x="139.3" y="404.8" width="1.5" height="1.5"/><rect x="144.3" y="404.8" width="1.5" height="1.5"/><rect x="149.3" y="404.8" width="1.5" height="1.5"/><rect x="154.3" y="404.8" width="1.5" height="1.5"/><rect x="159.3" y="404.8" width="1.5" height="1.5"/><rect x="164.3" y="404.8" width="1.5" height="1.5"/><rect x="169.3" y="404.8" width="1.5" height="1.5"/><rect x="174.3" y="404.8" width="1.5" height="1.5"/><rect x="179.3" y="404.8" width="1.5" height="1.5"/><rect x="184.3" y="404.8" width="1.5" height="1.5"/><rect x="189.3" y="404.8" width="1.5" height="1.5"/><rect x="194.3" y="404.8" width="1.5" height="1.5"/><rect x="199.3" y="404.8" width="1.5" height="1.5"/><rect x="204.3" y="404.8" width="1.5" height="1.5"/><rect x="147.3" y="434.8" width="1.5" height="1.5"/><rect x="152.3" y="434.8" width="1.5" height="1.5"/><rect x="157.3" y="434.8" width="1.5" height="1.5"/><rect x="162.3" y="434.8" width="1.5" height="1.5"/><rect x="167.3" y="434.8" width="1.5" height="1.5"/><rect x="172.3" y="434.8" width="1.5" height="1.5"/><rect x="177.3" y="434.8" width="1.5" height="1.5"/><rect x="182.3" y="434.8" width="1.5" height="1.5"/><rect x="187.3" y="434.8" width="1.5" height="1.5"/><rect x="192.3" y="434.8" width="1.5" height="1.5"/><rect x="197.3" y="434.8" width="1.5" height="1.5"/><rect x="202.3" y="434.8" width="1.5" height="1.5"/><rect x="207.3" y="434.8" width="1.5" height="1.5"/><rect x="212.3" y="434.8" width="1.5" height="1.5"/><rect x="126.5" y="464.8" width="1.5" height="1.5"/><rect x="131.5" y="464.8" width="1.5" height="1.5"/><rect x="136.5" y="464.8" width="1.5" height="1.5"/><rect x="141.5" y="464.8" width="1.5" height="1.5"/><rect x="146.5" y="464.8" width="1.5" height="1.5"/><rect x="151.5" y="464.8" width="1.5" height="1.5"/><rect x="156.5" y="464.8" width="1.5" height="1.5"/><rect x="161.5" y="464.8" width="1.5" height="1.5"/><rect x="166.5" y="464.8" width="1.5" height="1.5"/><rect x="171.5" y="464.8" width="1.5" height="1.5"/><rect x="176.5" y="464.8" width="1.5" height="1.5"/><rect x="181.5" y="464.8" width="1.5" height="1.5"/><rect x="186.5" y="464.8" width="1.5" height="1.5"/><rect x="191.5" y="464.8" width="1.5" height="1.5"/><rect x="196.5" y="464.8" width="1.5" height="1.5"/><rect x="201.5" y="464.8" width="1.5" height="1.5"/><rect x="89.8" y="494.8" width="1.5" height="1.5"/><rect x="94.8" y="494.8" width="1.5" height="1.5"/><rect x="99.8" y="494.8" width="1.5" height="1.5"/><rect x="104.8" y="494.8" width="1.5" height="1.5"/><rect x="109.8" y="494.8" width="1.5" height="1.5"/><rect x="114.8" y="494.8" width="1.5" height="1.5"/><rect x="119.8" y="494.8" width="1.5" height="1.5"/><rect x="124.8" y="494.8" width="1.5" height="1.5"/><rect x="129.8" y="494.8" width="1.5" height="1.5"/><rect x="134.8" y="494.8" width="1.5" height="1.5"/><rect x="139.8" y="494.8" width="1.5" height="1.5"/><rect x="144.8" y="494.8" width="1.5" height="1.5"/><rect x="149.8" y="494.8" width="1.5" height="1.5"/><rect x="154.8" y="494.8" width="1.5" height="1.5"/><rect x="159.8" y="494.8" width="1.5" height="1.5"/><rect x="164.8" y="494.8" width="1.5" height="1.5"/><rect x="169.8" y="494.8" width="1.5" height="1.5"/><rect x="174.8" y="494.8" width="1.5" height="1.5"/><rect x="179.8" y="494.8" width="1.5" height="1.5"/><rect x="103.7" y="524.8" width="1.5" height="1.5"/><rect x="108.7" y="524.8" width="1.5" height="1.5"/><rect x="113.7" y="524.8" width="1.5" height="1.5"/><rect x="118.7" y="524.8" width="1.5" height="1.5"/><rect x="123.7" y="524.8" width="1.5" height="1.5"/><rect x="128.7" y="524.8" width="1.5" height="1.5"/><rect x="133.7" y="524.8" width="1.5" height="1.5"/><rect x="138.7" y="524.8" width="1.5" height="1.5"/><rect x="143.7" y="524.8" width="1.5" height="1.5"/><rect x="148.7" y="524.8" width="1.5" height="1.5"/><rect x="153.7" y="524.8" width="1.5" height="1.5"/><rect x="158.7" y="524.8" width="1.5" height="1.5"/><rect x="163.7" y="524.8" width="1.5" height="1.5"/><rect x="168.7" y="524.8" width="1.5" height="1.5"/><rect x="173.7" y="524.8" width="1.5" height="1.5"/><rect x="178.7" y="524.8" width="1.5" height="1.5"/><rect x="183.7" y="524.8" width="1.5" height="1.5"/><rect x="188.7" y="524.8" width="1.5" height="1.5"/><rect x="104.8" y="554.8" width="1.5" height="1.5"/><rect x="109.8" y="554.8" width="1.5" height="1.5"/><rect x="114.8" y="554.8" width="1.5" height="1.5"/><rect x="119.8" y="554.8" width="1.5" height="1.5"/><rect x="124.8" y="554.8" width="1.5" height="1.5"/><rect x="129.8" y="554.8" width="1.5" height="1.5"/><rect x="134.8" y="554.8" width="1.5" height="1.5"/><rect x="139.8" y="554.8" width="1.5" height="1.5"/><rect x="144.8" y="554.8" width="1.5" height="1.5"/><rect x="149.8" y="554.8" width="1.5" height="1.5"/><rect x="154.8" y="554.8" width="1.5" height="1.5"/><rect x="159.8" y="554.8" width="1.5" height="1.5"/><rect x="164.8" y="554.8" width="1.5" height="1.5"/><rect x="169.8" y="554.8" width="1.5" height="1.5"/><rect x="174.8" y="554.8" width="1.5" height="1.5"/><rect x="179.8" y="554.8" width="1.5" height="1.5"/><rect x="184.8" y="554.8" width="1.5" height="1.5"/><rect x="189.8" y="554.8" width="1.5" height="1.5"/><rect x="194.8" y="554.8" width="1.5" height="1.5"/><rect x="131.5" y="584.8" width="1.5" height="1.5"/><rect x="136.5" y="584.8" width="1.5" height="1.5"/><rect x="141.5" y="584.8" width="1.5" height="1.5"/><rect x="146.5" y="584.8" width="1.5" height="1.5"/><rect x="151.5" y="584.8" width="1.5" height="1.5"/><rect x="156.5" y="584.8" width="1.5" height="1.5"/><rect x="161.5" y="584.8" width="1.5" height="1.5"/><rect x="166.5" y="584.8" width="1.5" height="1.5"/><rect x="171.5" y="584.8" width="1.5" height="1.5"/><rect x="176.5" y="584.8" width="1.5" height="1.5"/><rect x="181.5" y="584.8" width="1.5" height="1.5"/><rect x="186.5" y="584.8" width="1.5" height="1.5"/><rect x="191.5" y="584.8" width="1.5" height="1.5"/><rect x="196.5" y="584.8" width="1.5" height="1.5"/><rect x="201.5" y="584.8" width="1.5" height="1.5"/><rect x="206.5" y="584.8" width="1.5" height="1.5"/><rect x="141.2" y="614.8" width="1.5" height="1.5"/><rect x="146.2" y="614.8" width="1.5" height="1.5"/><rect x="151.2" y="614.8" width="1.5" height="1.5"/><rect x="156.2" y="614.8" width="1.5" height="1.5"/><rect x="161.2" y="614.8" width="1.5" height="1.5"/><rect x="166.2" y="614.8" width="1.5" height="1.5"/><rect x="171.2" y="614.8" width="1.5" height="1.5"/><rect x="176.2" y="614.8" width="1.5" height="1.5"/><rect x="181.2" y="614.8" width="1.5" height="1.5"/><rect x="186.2" y="614.8" width="1.5" height="1.5"/><rect x="191.2" y="614.8" width="1.5" height="1.5"/><rect x="196.2" y="614.8" width="1.5" height="1.5"/><rect x="201.2" y="614.8" width="1.5" height="1.5"/><rect x="206.2" y="614.8" width="1.5" height="1.5"/><rect x="211.2" y="614.8" width="1.5" height="1.5"/><rect x="141.7" y="644.8" width="1.5" height="1.5"/><rect x="146.7" y="644.8" width="1.5" height="1.5"/><rect x="151.7" y="644.8" width="1.5" height="1.5"/><rect x="156.7" y="644.8" width="1.5" height="1.5"/><rect x="161.7" y="644.8" width="1.5" height="1.5"/><rect x="166.7" y="644.8" width="1.5" height="1.5"/><rect x="171.7" y="644.8" width="1.5" height="1.5"/><rect x="176.7" y="644.8" width="1.5" height="1.5"/><rect x="181.7" y="644.8" width="1.5" height="1.5"/><rect x="186.7" y="644.8" width="1.5" height="1.5"/><rect x="191.7" y="644.8" width="1.5" height="1.5"/><rect x="196.7" y="644.8" width="1.5" height="1.5"/><rect x="201.7" y="644.8" width="1.5" height="1.5"/><rect x="206.7" y="644.8" width="1.5" height="1.5"/><rect x="211.7" y="644.8" width="1.5" height="1.5"/><rect x="116.7" y="674.8" width="1.5" height="1.5"/><rect x="121.7" y="674.8" width="1.5" height="1.5"/><rect x="126.7" y="674.8" width="1.5" height="1.5"/><rect x="131.7" y="674.8" width="1.5" height="1.5"/><rect x="136.7" y="674.8" width="1.5" height="1.5"/><rect x="141.7" y="674.8" width="1.5" height="1.5"/><rect x="146.7" y="674.8" width="1.5" height="1.5"/><rect x="151.7" y="674.8" width="1.5" height="1.5"/><rect x="156.7" y="674.8" width="1.5" height="1.5"/><rect x="161.7" y="674.8" width="1.5" height="1.5"/><rect x="166.7" y="674.8" width="1.5" height="1.5"/><rect x="171.7" y="674.8" width="1.5" height="1.5"/><rect x="176.7" y="674.8" width="1.5" height="1.5"/><rect x="181.7" y="674.8" width="1.5" height="1.5"/><rect x="186.7" y="674.8" width="1.5" height="1.5"/><rect x="191.7" y="674.8" width="1.5" height="1.5"/><rect x="196.7" y="674.8" width="1.5" height="1.5"/></g></svg>
<div style="position:absolute;left:775px;top:303px;width:1px;height:30px;background:#1a1a1a;"></div>
<div style="position:absolute;left:751px;top:328px;width:426px;height:418px;border:4.7px solid #e61b23;"></div>
<div style="position:absolute;left:1021px;top:460px;width:59px;height:59px;background:rgba(100,210,90,0.45);border-radius:50%;"></div>
<svg style="position:absolute;left:1047px;top:481px;" width="10" height="18" viewBox="0 0 10 18"><path d="M1 1 H4 Q5 1 5 2.5 V15.5 Q5 17 4 17 H1 M9 1 H6 Q5 1 5 2.5 M9 17 H6 Q5 17 5 15.5" fill="none" stroke="#1a1a1a" stroke-width="1"/></svg>
</body></html>
